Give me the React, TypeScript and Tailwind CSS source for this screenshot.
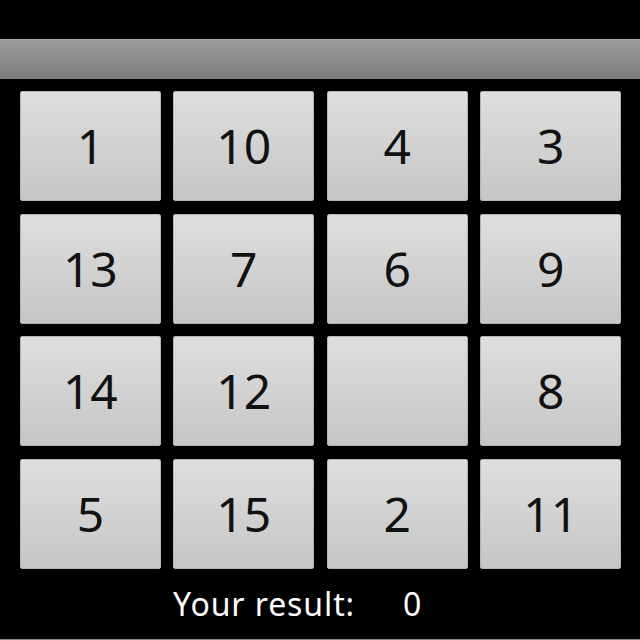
import React from "react"

const tiles = ["1", "10", "4", "3", "13", "7", "6", "9", "14", "12", "", "8", "5", "15", "2", "11"]

export default function App() {
    return (
        <div
            className="flex h-[640px] w-[640px] flex-col overflow-hidden bg-black"
            style={{ fontFamily: '"Noto Sans", "Open Sans", sans-serif' }}
        >
            {/* Title bar */}
            <div className="mt-[39px] h-[40px] shrink-0 border-t border-[#a8a8a8] bg-gradient-to-b from-[#9c9c9c] to-[#7a7a7a]" />

            {/* Board */}
            <div className="mt-[12px] grid grid-cols-4 gap-x-[12.7px] gap-y-[12.7px] pl-[20px] pr-[19px]">
                {tiles.map((t, i) => (
                    <button
                        key={i}
                        type="button"
                        className="flex h-[110px] items-center justify-center rounded-[2px] border border-[#b4b4b4] bg-gradient-to-b from-[#dedede] to-[#c6c6c6] text-[48px] leading-none text-[#111]"
                    >
                        {t}
                    </button>
                ))}
            </div>

            {/* Result */}
            <div className="mt-[19px] flex pl-[173px] text-[32px] leading-none tracking-[0.9px] text-white">
                <span>Your result:</span>
                <span className="ml-[48px]">0</span>
            </div>

            <div className="flex-1" />
            <div className="h-[1px] bg-[#8a8a8a]" />
        </div>
    )
}
